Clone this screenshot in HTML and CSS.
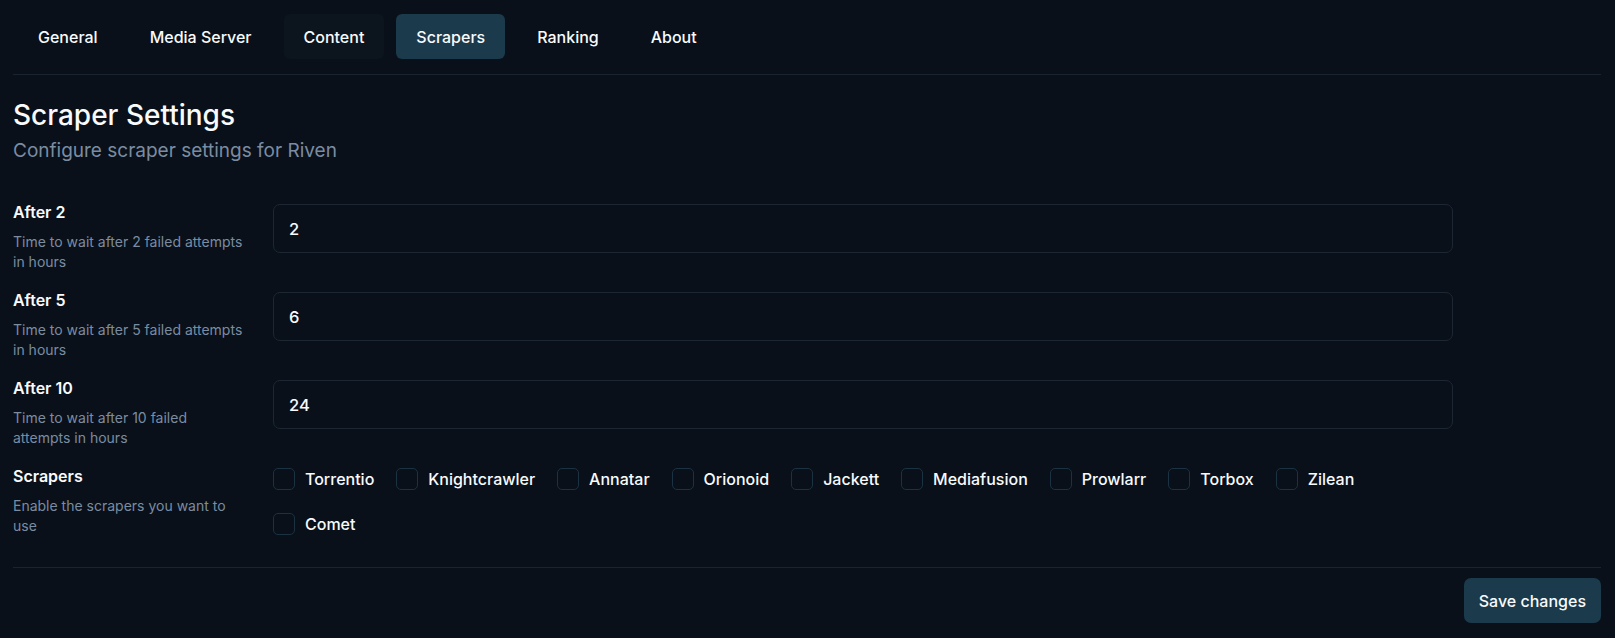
FILE: index.html
```html
<!DOCTYPE html>
<html lang="en">
<head>
<meta charset="utf-8">
<title>Scraper Settings</title>
<link rel="stylesheet" href="styles.css">
</head>
<body>
<div class="page">
  <nav class="tabs">
    <div class="tablist">
      <a class="tab">General</a>
      <a class="tab">Media Server</a>
      <a class="tab tab-hover">Content</a>
      <a class="tab tab-active">Scrapers</a>
      <a class="tab">Ranking</a>
      <a class="tab">About</a>
    </div>
  </nav>

  <header class="heading">
    <h1 class="title">Scraper Settings</h1>
    <p class="subtitle">Configure scraper settings for Riven</p>
  </header>

  <form class="form">
    <div class="row">
      <div class="label-col">
        <div class="label">After 2</div>
        <div class="desc">Time to wait after 2 failed attempts in hours</div>
      </div>
      <div class="field"><input class="input" type="text" value="2"></div>
    </div>
    <div class="row">
      <div class="label-col">
        <div class="label">After 5</div>
        <div class="desc">Time to wait after 5 failed attempts in hours</div>
      </div>
      <div class="field"><input class="input" type="text" value="6"></div>
    </div>
    <div class="row">
      <div class="label-col">
        <div class="label">After 10</div>
        <div class="desc">Time to wait after 10 failed attempts in hours</div>
      </div>
      <div class="field"><input class="input" type="text" value="24"></div>
    </div>
    <div class="row">
      <div class="label-col">
        <div class="label">Scrapers</div>
        <div class="desc">Enable the scrapers you want to use</div>
      </div>
      <div class="field checks">
        <label class="check"><span class="box"></span><span class="check-text">Torrentio</span></label>
        <label class="check"><span class="box"></span><span class="check-text">Knightcrawler</span></label>
        <label class="check"><span class="box"></span><span class="check-text">Annatar</span></label>
        <label class="check"><span class="box"></span><span class="check-text">Orionoid</span></label>
        <label class="check"><span class="box"></span><span class="check-text">Jackett</span></label>
        <label class="check"><span class="box"></span><span class="check-text">Mediafusion</span></label>
        <label class="check"><span class="box"></span><span class="check-text">Prowlarr</span></label>
        <label class="check"><span class="box"></span><span class="check-text">Torbox</span></label>
        <label class="check"><span class="box"></span><span class="check-text">Zilean</span></label>
        <label class="check"><span class="box"></span><span class="check-text">Comet</span></label>
      </div>
    </div>
  </form>

  <div class="footer">
    <button class="save" type="button">Save changes</button>
  </div>
</div>
</body>
</html>
```

FILE: styles.css
```css
* { box-sizing: border-box; }

html, body {
  margin: 0;
  padding: 0;
  background: #09101a;
  color: #f8fafc;
  font-family: Inter, "Noto Sans", sans-serif;
}

.page {
  padding: 14px 14px 0 13px;
  height: 638px;
}

.tabs {
  border-bottom: 1px solid #1a2430;
  padding-bottom: 15px;
}

.tablist {
  display: flex;
  gap: 12px;
  padding-left: 5px;
}

.tab {
  height: 45px;
  display: flex;
  align-items: center;
  padding: 0 20px;
  border-radius: 6px;
  font-size: 16px;
  font-weight: 500;
  color: #f8fafc;
}

.tab-hover { background: #0c151e; }
.tab-active { background: #1b3a4b; }

.heading { padding-top: 22px; }

.title {
  margin: 0;
  font-size: 28px;
  line-height: 36px;
  font-weight: 500;
}

.subtitle {
  margin: 4px 0 0;
  font-size: 19px;
  line-height: 28px;
  color: #7b8ca1;
}

.form {
  margin-top: 35px;
  max-width: 1440px;
  display: flex;
  flex-direction: column;
  gap: 16px;
}

.row {
  display: flex;
  gap: 28px;
  align-items: flex-start;
}

.label-col {
  width: 232px;
  flex: none;
}

.label {
  font-size: 16px;
  line-height: 24px;
  font-weight: 600;
}

.desc {
  margin-top: 8px;
  font-size: 14px;
  line-height: 20px;
  color: #7b8ca1;
}

.field {
  flex: 1;
  padding-top: 4px;
}

.input {
  width: 100%;
  height: 49px;
  background: #09101a;
  border: 1px solid #1c2733;
  border-radius: 7px;
  padding: 0 15px;
  color: #f8fafc;
  font-family: inherit;
  font-size: 16.5px;
  font-weight: 500;
  outline: none;
}

.checks {
  display: flex;
  flex-wrap: wrap;
  column-gap: 22px;
  row-gap: 21px;
  padding-top: 3px;
}

.check {
  display: flex;
  align-items: center;
  gap: 10px;
  height: 24px;
}

.box {
  width: 22px;
  height: 22px;
  border: 1px solid #1a3242;
  border-radius: 5px;
  flex: none;
}

.check-text {
  font-size: 16px;
  font-weight: 500;
}

.footer {
  margin-top: 31px;
  border-top: 1px solid #1a2430;
  padding-top: 10px;
  display: flex;
  justify-content: flex-end;
}

.save {
  height: 45px;
  padding: 0 15px;
  background: #1b3a4b;
  border: none;
  border-radius: 7px;
  color: #f8fafc;
  font-family: inherit;
  font-size: 16px;
  font-weight: 500;
}
```
